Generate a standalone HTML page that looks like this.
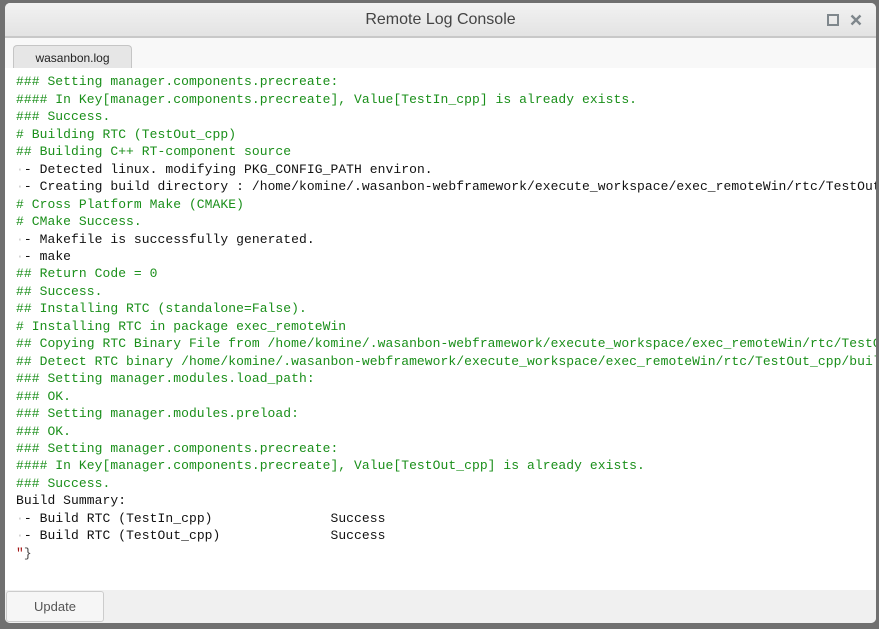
<!DOCTYPE html>
<html><head><style>
body{margin:0;width:879px;height:629px;background:#707070;overflow:hidden;position:relative;font-family:"Liberation Sans",sans-serif}
.win{position:absolute;left:5px;top:3px;width:871px;height:620px;background:#f0f0f0;border-radius:5px;overflow:hidden}
.title{height:33px;background:linear-gradient(#f2f2f2,#e3e3e3);border-bottom:2px solid #c8c8c8;text-align:center;line-height:33px;font-size:16px;color:#444}
.tabs{position:absolute;top:35px;left:0;right:0;height:30px;background:#f8f8f8;border-bottom:1px solid #e8e8e8}
.tab{position:absolute;left:8px;top:7px;width:117px;height:24px;background:#e6e6e6;border:1px solid #c5c5c5;border-bottom:none;border-radius:4px 4px 0 0;text-align:center;font-size:12px;line-height:24px;color:#222}
.log{position:absolute;top:65px;left:0;right:0;height:522px;background:#fff;overflow:hidden;font-family:"Liberation Mono",monospace;font-size:13px;letter-spacing:0.06px;line-height:17.45px;white-space:pre;padding-left:11px;box-sizing:border-box}
.g{color:#1a8f1a}.k{color:#111}.d{color:#ccc}
.foot{position:absolute;top:587px;left:0;right:0;height:33px;background:#f0f0f0}
.btn{position:absolute;left:1px;top:1px;width:96px;height:29px;border:1px solid #ccc;border-radius:3px;background:#f6f6f6;font-size:13px;color:#555;text-align:center;line-height:29px}
</style></head><body>
<div class="win">
<div class="title">Remote Log Console</div>
<svg style="position:absolute;left:822px;top:11px" width="12" height="12"><rect x="1" y="1" width="10" height="10" fill="none" stroke="#7f878c" stroke-width="2"/></svg>
<svg style="position:absolute;left:845px;top:11px" width="12" height="12"><path d="M1.5 1.5L10.5 10.5M10.5 1.5L1.5 10.5" stroke="#7f878c" stroke-width="2.4"/></svg>
<div class="tabs"><div class="tab">wasanbon.log</div></div>
<div class="log"><div style="margin-top:-12px"><span class="g">### OK.</span>
<span class="g">### Setting manager.components.precreate:</span>
<span class="g">#### In Key[manager.components.precreate], Value[TestIn_cpp] is already exists.</span>
<span class="g">### Success.</span>
<span class="g"># Building RTC (TestOut_cpp)</span>
<span class="g">## Building C++ RT-component source</span>
<span class="d">·</span><span class="k">- Detected linux. modifying PKG_CONFIG_PATH environ.</span>
<span class="d">·</span><span class="k">- Creating build directory : /home/komine/.wasanbon-webframework/execute_workspace/exec_remoteWin/rtc/TestOut_cpp/build</span>
<span class="g"># Cross Platform Make (CMAKE)</span>
<span class="g"># CMake Success.</span>
<span class="d">·</span><span class="k">- Makefile is successfully generated.</span>
<span class="d">·</span><span class="k">- make</span>
<span class="g">## Return Code = 0</span>
<span class="g">## Success.</span>
<span class="g">## Installing RTC (standalone=False).</span>
<span class="g"># Installing RTC in package exec_remoteWin</span>
<span class="g">## Copying RTC Binary File from /home/komine/.wasanbon-webframework/execute_workspace/exec_remoteWin/rtc/TestOut_cpp</span>
<span class="g">## Detect RTC binary /home/komine/.wasanbon-webframework/execute_workspace/exec_remoteWin/rtc/TestOut_cpp/build</span>
<span class="g">### Setting manager.modules.load_path:</span>
<span class="g">### OK.</span>
<span class="g">### Setting manager.modules.preload:</span>
<span class="g">### OK.</span>
<span class="g">### Setting manager.components.precreate:</span>
<span class="g">#### In Key[manager.components.precreate], Value[TestOut_cpp] is already exists.</span>
<span class="g">### Success.</span>
<span class="k">Build Summary:</span>
<span class="d">·</span><span class="k">- Build RTC (TestIn_cpp)               Success</span>
<span class="d">·</span><span class="k">- Build RTC (TestOut_cpp)              Success</span>
<span style="color:#a31515">"</span><span style="color:#444">}</span></div></div>
<div class="foot"><div class="btn">Update</div></div>
</div>
</body></html>
